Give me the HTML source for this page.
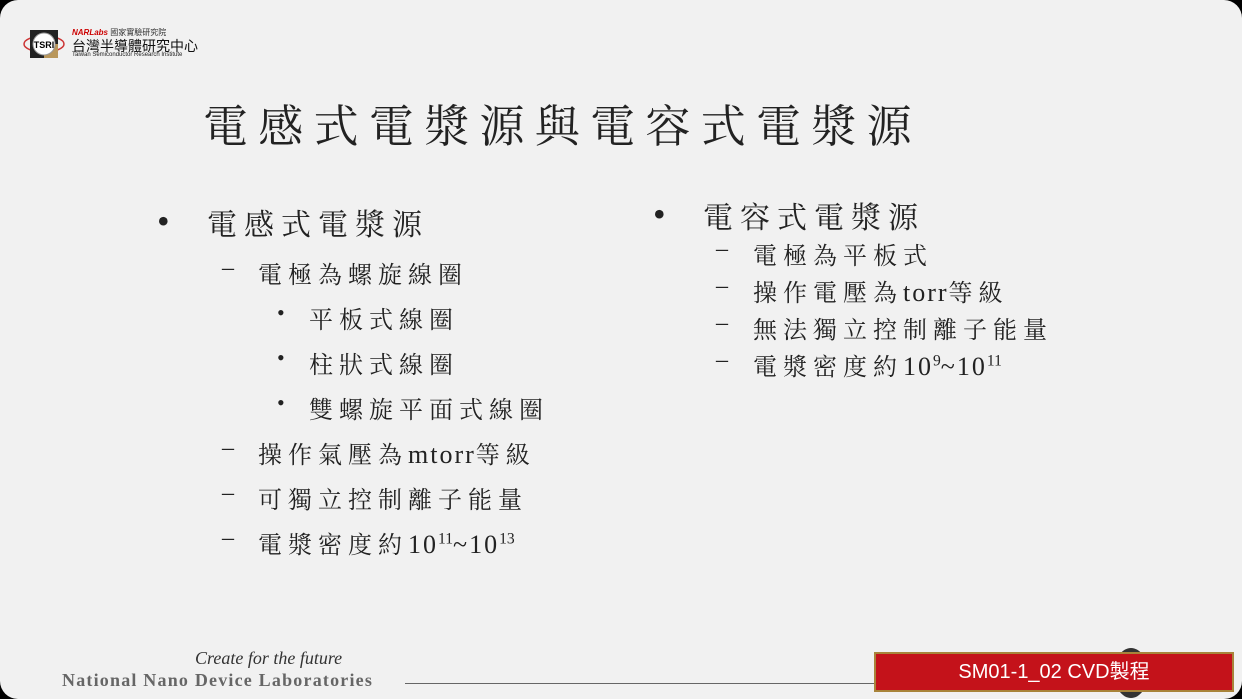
<html><head><style>
body{margin:0;width:1242px;height:699px;background:#000;overflow:hidden;position:relative}
#s{position:absolute;left:0;top:0;width:1242px;height:699px;background:#f1f1f1;border-radius:18px}
.t{position:absolute;font-family:"Liberation Serif","Noto Serif CJK SC",serif;color:#222;white-space:nowrap}
.l{letter-spacing:2px;font-size:26px}
sup{font-size:60%;vertical-align:0.6em;line-height:0;letter-spacing:0}
.b{font-size:22px}
</style></head><body><div id="s">
<svg style="position:absolute;left:22px;top:28px" width="44" height="32"><ellipse cx="22" cy="16" rx="20" ry="8" fill="none" stroke="#c33" stroke-width="1.5"/><rect x="8" y="2" width="28" height="28" fill="#222"/><rect x="22" y="16" width="14" height="14" fill="#b9975b"/><circle cx="22" cy="16" r="11" fill="#fff" stroke="#999"/><text x="22" y="20" font-size="9" text-anchor="middle" font-family="Liberation Sans" font-weight="bold">TSRI</text></svg>
<div class="t" style="left:72px;top:27px;font-size:8px;font-family:'Liberation Sans','Noto Sans CJK TC',sans-serif;color:#c00;font-weight:bold;font-style:italic">NARLabs <span style="color:#333;font-style:normal;font-weight:normal">國家實驗研究院</span></div>
<div class="t" style="left:72px;top:36px;font-size:14px;font-family:'Liberation Sans','Noto Sans CJK TC',sans-serif;color:#111">台灣半導體研究中心</div>
<div class="t" style="left:72px;top:52px;font-size:6px;font-family:'Liberation Sans',sans-serif">Taiwan Semiconductor Research Institute</div>
<div class="t" style="left:203px;top:90px;font-size:45px;letter-spacing:10.3px">電感式電漿源與電容式電漿源</div>
<div class="t" style="left:157px;top:200px;font-size:36px">•</div>
<div class="t" style="left:207px;top:200px;font-size:30px;letter-spacing:7px">電感式電漿源</div>
<div class="t" style="left:222px;top:255px;font-size:24px">–</div>
<div class="t" style="left:258px;top:255px;font-size:24px;letter-spacing:6px">電極為螺旋線圈</div>
<div class="t b" style="left:277px;top:300px">•</div>
<div class="t" style="left:309px;top:300px;font-size:24px;letter-spacing:6px">平板式線圈</div>
<div class="t b" style="left:277px;top:345px">•</div>
<div class="t" style="left:309px;top:345px;font-size:24px;letter-spacing:6px">柱狀式線圈</div>
<div class="t b" style="left:277px;top:390px">•</div>
<div class="t" style="left:309px;top:390px;font-size:24px;letter-spacing:6px">雙螺旋平面式線圈</div>
<div class="t" style="left:222px;top:435px;font-size:24px">–</div>
<div class="t" style="left:258px;top:435px;font-size:24px;letter-spacing:6px">操作氣壓為<span class="l">mtorr</span>等級</div>
<div class="t" style="left:222px;top:480px;font-size:24px">–</div>
<div class="t" style="left:258px;top:480px;font-size:24px;letter-spacing:6px">可獨立控制離子能量</div>
<div class="t" style="left:222px;top:525px;font-size:24px">–</div>
<div class="t" style="left:258px;top:525px;font-size:24px;letter-spacing:6px">電漿密度約<span class="l">10<sup>11</sup>~10<sup>13</sup></span></div>
<div class="t" style="left:653px;top:193px;font-size:36px">•</div>
<div class="t" style="left:703px;top:193px;font-size:30px;letter-spacing:7px">電容式電漿源</div>
<div class="t" style="left:716px;top:236px;font-size:24px">–</div>
<div class="t" style="left:753px;top:236px;font-size:24px;letter-spacing:6px">電極為平板式</div>
<div class="t" style="left:716px;top:273px;font-size:24px">–</div>
<div class="t" style="left:753px;top:273px;font-size:24px;letter-spacing:6px">操作電壓為<span class="l">torr</span>等級</div>
<div class="t" style="left:716px;top:310px;font-size:24px">–</div>
<div class="t" style="left:753px;top:310px;font-size:24px;letter-spacing:6px">無法獨立控制離子能量</div>
<div class="t" style="left:716px;top:347px;font-size:24px">–</div>
<div class="t" style="left:753px;top:347px;font-size:24px;letter-spacing:6px">電漿密度約<span class="l">10<sup>9</sup>~10<sup>11</sup></span></div>
<div class="t" style="left:195px;top:648px;font-size:18px;font-style:italic;color:#333">Create for the future</div>
<div class="t" style="left:62px;top:670px;font-size:18px;font-weight:bold;color:#666;letter-spacing:1.2px">National Nano Device Laboratories</div>
<div style="position:absolute;left:405px;top:683px;width:470px;height:1px;background:#666"></div>
<div style="position:absolute;left:1114px;top:648px;width:34px;height:50px;border-radius:50%;background:#333"></div>
<div style="position:absolute;left:874px;top:652px;width:356px;height:36px;background:#c4121a;border:2px solid #a8843a;color:#fff;font:20px 'Liberation Sans','Noto Sans CJK TC',sans-serif;text-align:center;line-height:36px">SM01-1_02 CVD製程</div>
</div></body></html>
